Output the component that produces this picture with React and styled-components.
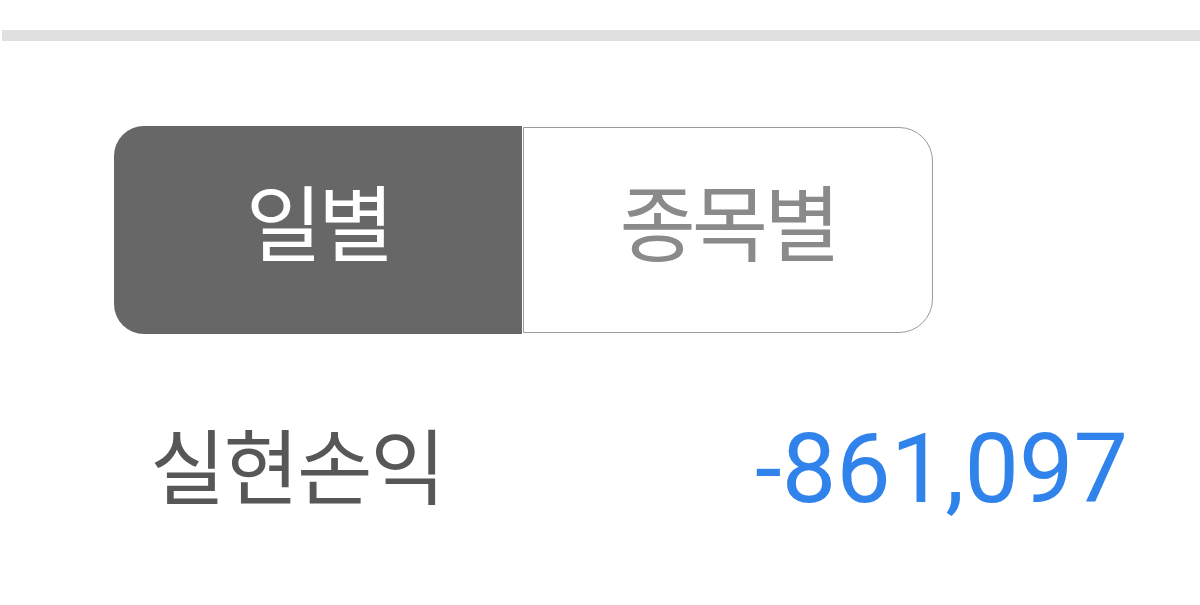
import styled, { createGlobalStyle } from "styled-components";

const GlobalStyle = createGlobalStyle`
  html, body {
    margin: 0;
    padding: 0;
    background: #ffffff;
  }
  body {
    font-family: "Noto Sans CJK KR", "Noto Sans", sans-serif;
  }
`;

const Page = styled.main`
  width: 1200px;
  height: 605px;
  overflow: hidden;
  padding-top: 30px;
  box-sizing: border-box;
`;

const TopBar = styled.div`
  height: 11px;
  margin-left: 2px;
  background: #e0e0e0;
`;

const Segmented = styled.div`
  display: flex;
  margin: 85px 0 0 114px;
  height: 208px;
`;

const Segment = styled.button`
  width: ${(p) => p.$width}px;
  height: 100%;
  box-sizing: border-box;
  display: flex;
  align-items: center;
  justify-content: center;
  padding: 0 0 22px;
  font-family: "Noto Sans CJK KR", sans-serif;
  font-size: 83px;
  letter-spacing: -4px;
  cursor: pointer;
  background: ${(p) => (p.$active ? "#676767" : "#ffffff")};
  color: ${(p) => (p.$active ? "#ffffff" : "#8a8a8a")};
  border: ${(p) => (p.$active ? "none" : "1px solid #9a9a9a")};
  border-radius: ${(p) => (p.$active ? "30px 0 0 30px" : "0 34px 34px 0")};
  margin-left: ${(p) => (p.$active ? 0 : 1)}px;
  ${(p) => !p.$active && "height: 206px; margin-top: 1px;"}
`;

const SummaryRow = styled.div`
  display: flex;
  align-items: center;
  justify-content: space-between;
  margin-top: 87px;
  padding: 0 72px 0 150px;
`;

const Label = styled.span`
  font-family: "Noto Sans CJK KR", sans-serif;
  font-size: 82px;
  line-height: 1;
  letter-spacing: -2px;
  padding-bottom: 14px;
  color: #575757;
`;

const Amount = styled.span`
  font-family: Roboto, "Noto Sans", sans-serif;
  font-size: 97px;
  line-height: 1;
  color: #3183ec;
`;

export default function App() {
  return (
    <>
      <GlobalStyle />
      <Page>
        <TopBar />
        <Segmented>
          <Segment $active $width={408}>일별</Segment>
          <Segment $width={410}>종목별</Segment>
        </Segmented>
        <SummaryRow>
          <Label>실현손익</Label>
          <Amount>-861,097</Amount>
        </SummaryRow>
      </Page>
    </>
  );
}
